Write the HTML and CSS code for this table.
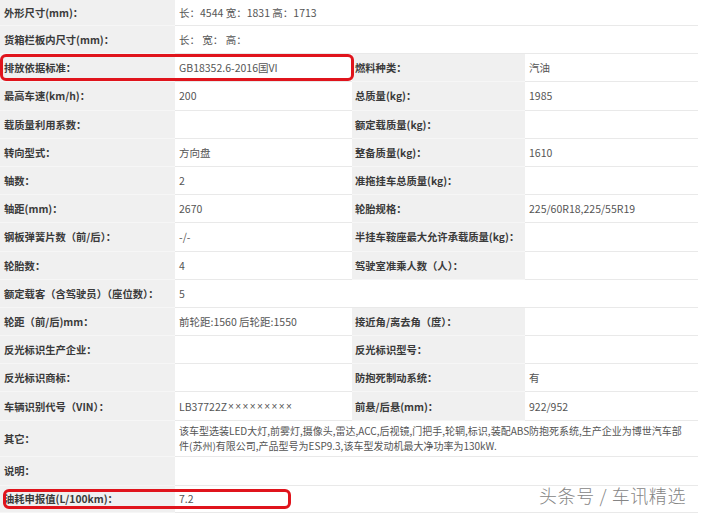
FILE: index.html
```html
<!DOCTYPE html>
<html lang="zh-CN">
<head>
<meta charset="utf-8">
<title>车辆参数</title>
<link rel="stylesheet" href="styles.css">
</head>
<body>
<div class="page">
  <div class="sheet">
    <div class="k">外形尺寸(mm)：</div><div class="v span3">长：4544 宽：1831 高：1713</div>
    <div class="k">货箱栏板内尺寸(mm)：</div><div class="v span3">长： 宽： 高：</div>
    <div class="k">排放依据标准：</div><div class="v">GB18352.6-2016国VI</div><div class="k k2">燃料种类：</div><div class="v">汽油</div>
    <div class="k">最高车速(km/h)：</div><div class="v">200</div><div class="k k2">总质量(kg)：</div><div class="v">1985</div>
    <div class="k">载质量利用系数：</div><div class="v"></div><div class="k k2">额定载质量(kg)：</div><div class="v"></div>
    <div class="k">转向型式：</div><div class="v">方向盘</div><div class="k k2">整备质量(kg)：</div><div class="v">1610</div>
    <div class="k">轴数：</div><div class="v">2</div><div class="k k2">准拖挂车总质量(kg)：</div><div class="v"></div>
    <div class="k">轴距(mm)：</div><div class="v">2670</div><div class="k k2">轮胎规格：</div><div class="v">225/60R18,225/55R19</div>
    <div class="k">钢板弹簧片数（前/后）：</div><div class="v">-/-</div><div class="k k2">半挂车鞍座最大允许承载质量(kg)：</div><div class="v"></div>
    <div class="k">轮胎数：</div><div class="v">4</div><div class="k k2">驾驶室准乘人数（人）：</div><div class="v"></div>
    <div class="k wide">额定载客（含驾驶员）（座位数）：</div><div class="v span3">5</div>
    <div class="k">轮距（前/后)mm：</div><div class="v">前轮距:1560 后轮距:1550</div><div class="k k2">接近角/离去角（度）：</div><div class="v"></div>
    <div class="k">反光标识生产企业：</div><div class="v"></div><div class="k k2">反光标识型号：</div><div class="v"></div>
    <div class="k">反光标识商标：</div><div class="v"></div><div class="k k2">防抱死制动系统：</div><div class="v">有</div>
    <div class="k">车辆识别代号（VIN）：</div><div class="v">LB37722Z<span class="xs">×××××××××</span></div><div class="k k2">前悬/后悬(mm)：</div><div class="v">922/952</div>
    <div class="k">其它：</div><div class="v span3 multi"><span class="line">该车型选装LED大灯,前雾灯,摄像头,雷达,ACC,后视镜,门把手,轮辋,标识,装配ABS防抱死系统,生产企业为博世汽车部</span><span class="line">件(苏州)有限公司,产品型号为ESP9.3,该车型发动机最大净功率为130kW.</span></div>
    <div class="k">说明：</div><div class="v span3"></div>
    <div class="k">油耗申报值(L/100km)：</div><div class="v span3">7.2</div>
  </div>
  <div class="mark mark-a"></div>
  <div class="mark mark-b"></div>
  <div class="watermark">头条号 / 车讯精选</div>
</div>
</body>
</html>
```

FILE: styles.css
```css
* { box-sizing: border-box; }
html, body { margin: 0; padding: 0; background: #fff; }
body {
  font-family: "Noto Sans CJK SC", "Noto Sans", "Liberation Sans", sans-serif;
  width: 706px;
  height: 513px;
  overflow: hidden;
}
.page { position: relative; width: 706px; height: 513px; }
.sheet {
  display: grid;
  grid-template-columns: 175px 177px 173px 173px;
  grid-template-rows: 26px repeat(14, 28.2px) 36px 29px 27px;
}
.k, .v {
  display: flex;
  align-items: center;
  padding-left: 4px;
  white-space: nowrap;
  border-bottom: 1px solid #e9e9e9;
  font-size: 10.5px;
}
.k {
  background: #f0f0f0;
  color: #3a3a3a;
  font-weight: 700;
  font-size: 10.3px;
  border-bottom-color: #f6f6f6;
}
.k2 { padding-left: 3px; }
.wide { overflow: visible; }
.v { color: #555; background: #fff; }
.span3 { grid-column: span 3; }
.xs {
  font-family: "Liberation Sans", sans-serif;
  font-size: 10px;
  letter-spacing: 1.4px;
  margin-left: 1px;
}
.multi {
  flex-direction: column;
  align-items: flex-start;
  justify-content: center;
  font-size: 10px;
  line-height: 15px;
  letter-spacing: 0;
}
.line { display: block; }
.mark {
  position: absolute;
  border: 3px solid #e0141c;
  border-radius: 6px;
}
.mark-a { left: 0; top: 54px; width: 354px; height: 27px; }
.mark-b { left: 3px; top: 489px; width: 288px; height: 20px; }
.watermark {
  position: absolute;
  left: 539px;
  top: 485px;
  font-size: 18px;
  line-height: 20px;
  font-weight: 300;
  letter-spacing: 0.6px;
  color: #858585;
  white-space: nowrap;
  text-shadow: 0 0 2px #fff;
}
```
